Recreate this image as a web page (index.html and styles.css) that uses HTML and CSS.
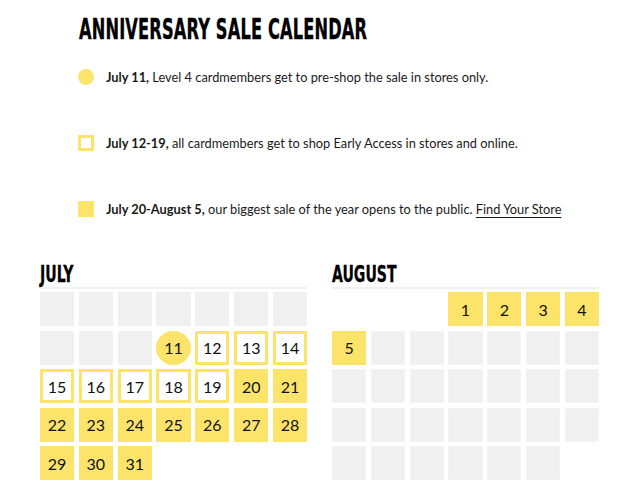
FILE: index.html
```html
<!DOCTYPE html>
<html lang="en">
<head>
<meta charset="utf-8">
<title>Anniversary Sale Calendar</title>
<link rel="stylesheet" href="styles.css">
</head>
<body>
<main class="page">
  <h1 class="title"><span class="title-text">ANNIVERSARY SALE CALENDAR</span></h1>
  <ul class="legend">
    <li class="legend-item"><span class="key key-circle"></span><p class="legend-text"><b>July 11,</b> Level 4 cardmembers get to pre-shop the sale in stores only.</p></li>
    <li class="legend-item"><span class="key key-outline"></span><p class="legend-text"><b>July 12-19,</b> all cardmembers get to shop Early Access in stores and online.</p></li>
    <li class="legend-item"><span class="key key-fill"></span><p class="legend-text"><b>July 20-August 5,</b> our biggest sale of the year opens to the public. <a class="link" href="#">Find Your Store</a></p></li>
  </ul>
  <div class="calendars">
    <section class="month">
      <h2 class="month-title"><span class="month-name">JULY</span></h2>
      <div class="grid">
        <span class="cell off"></span><span class="cell off"></span><span class="cell off"></span><span class="cell off"></span><span class="cell off"></span><span class="cell off"></span><span class="cell off"></span>
        <span class="cell off"></span><span class="cell off"></span><span class="cell off"></span><span class="cell circle">11</span><span class="cell outline">12</span><span class="cell outline">13</span><span class="cell outline">14</span>
        <span class="cell outline">15</span><span class="cell outline">16</span><span class="cell outline">17</span><span class="cell outline">18</span><span class="cell outline">19</span><span class="cell fill">20</span><span class="cell fill">21</span>
        <span class="cell fill">22</span><span class="cell fill">23</span><span class="cell fill">24</span><span class="cell fill">25</span><span class="cell fill">26</span><span class="cell fill">27</span><span class="cell fill">28</span>
        <span class="cell fill">29</span><span class="cell fill">30</span><span class="cell fill">31</span>
      </div>
    </section>
    <section class="month">
      <h2 class="month-title"><span class="month-name">AUGUST</span></h2>
      <div class="grid">
        <span class="cell empty"></span><span class="cell empty"></span><span class="cell empty"></span><span class="cell fill">1</span><span class="cell fill">2</span><span class="cell fill">3</span><span class="cell fill">4</span>
        <span class="cell fill">5</span><span class="cell off soft"></span><span class="cell off soft"></span><span class="cell off soft"></span><span class="cell off soft"></span><span class="cell off soft"></span><span class="cell off soft"></span>
        <span class="cell off soft"></span><span class="cell off soft"></span><span class="cell off soft"></span><span class="cell off soft"></span><span class="cell off soft"></span><span class="cell off soft"></span><span class="cell off soft"></span>
        <span class="cell off soft"></span><span class="cell off soft"></span><span class="cell off soft"></span><span class="cell off soft"></span><span class="cell off soft"></span><span class="cell off soft"></span><span class="cell off soft"></span>
        <span class="cell off soft"></span><span class="cell off soft"></span><span class="cell off soft"></span><span class="cell off soft"></span><span class="cell off soft"></span><span class="cell off soft"></span>
      </div>
    </section>
  </div>
</main>
</body>
</html>
```
FILE: styles.css
```css
* { box-sizing: border-box; }
html, body { margin: 0; padding: 0; background: #fff; }
body {
  font-family: Lato, "Noto Sans", sans-serif;
  color: #1a1a1a;
}
.page {
  padding: 0 0 0 40px;
}
.title {
  margin: 0 0 0 39px;
  padding-top: 15px;
  height: 44px;
  font-family: "DejaVu Sans Condensed", "DejaVu Sans", sans-serif;
  font-stretch: condensed;
  font-weight: 700;
  font-size: 29px;
  line-height: 29px;
  letter-spacing: 0.3px;
  white-space: nowrap;
}
.title-text {
  display: inline-block;
  transform: scaleX(0.62);
  transform-origin: left center;
  -webkit-text-stroke: 0.4px #000;
  color: #000;
}
.legend {
  list-style: none;
  margin: 0 0 0 38px;
  padding: 0;
  display: flex;
  flex-direction: column;
  gap: 50px;
  padding-top: 25px;
}
.legend-item {
  display: flex;
  align-items: center;
  gap: 12px;
  height: 16px;
}
.key {
  flex: none;
  width: 16px;
  height: 16px;
  background: #fce46b;
}
.key-circle { border-radius: 50%; }
.key-outline { background: #fff; border: 3px solid #fce46b; }
.legend-text {
  margin: 0;
  font-size: 12.8px;
  line-height: 16px;
  white-space: nowrap;
}
.legend-text b { font-weight: 700; }
.link {
  color: #1a1a1a;
  text-decoration: underline;
  text-underline-offset: 3px;
  text-decoration-thickness: 1px;
}
.calendars {
  display: flex;
  gap: 25px;
  margin-top: 46px;
}
.month { width: 267px; }
.month-title {
  margin: 0;
  height: 22px;
  font-family: "DejaVu Sans Condensed", "DejaVu Sans", sans-serif;
  font-stretch: condensed;
  font-weight: 700;
  font-size: 23px;
  line-height: 22px;
  border-bottom: 2px solid #f0f0f0;
  box-sizing: content-box;
  padding-bottom: 2px;
  white-space: nowrap;
  color: #000;
}
.month-name {
  display: inline-block;
  transform: scaleX(0.68);
  transform-origin: left center;
  -webkit-text-stroke: 0.3px #000;
}
.grid {
  margin-top: 3px;
  display: grid;
  grid-template-columns: repeat(7, 1fr);
  grid-auto-rows: 34px;
  gap: 4.6px 4.8px;
}
.cell {
  display: flex;
  align-items: center;
  justify-content: center;
  font-size: 16px;
  color: #111;
}
.off { background: #f0f0f0; }
.soft { box-shadow: inset 0 0 0 1px #f4f4f4; }
.fill { background: #fce46b; }
.outline { border: 3px solid #fce46b; background: #fff; }
.circle { background: #fce46b; border-radius: 50%; }
```
